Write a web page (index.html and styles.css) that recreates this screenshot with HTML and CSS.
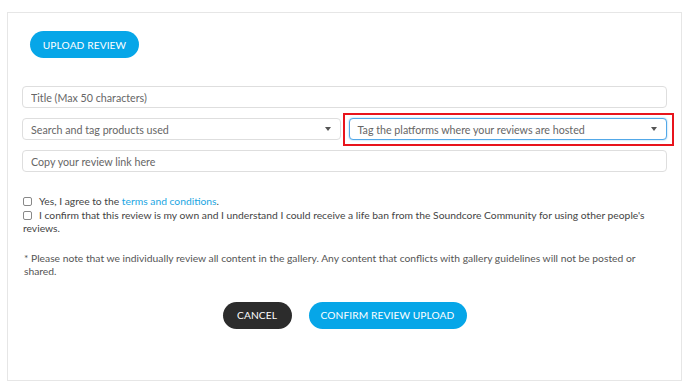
FILE: index.html
```html
<!DOCTYPE html>
<html lang="en">
<head>
    <meta charset="UTF-8">
    <meta name="viewport" content="width=device-width, initial-scale=1.0">
    <title>Upload Review</title>
    <link rel="stylesheet" href="styles.css">
</head>
<body>

<div class="card">
    <button class="btn btn-blue upload-btn">UPLOAD REVIEW</button>

    <form class="review-form">
        <input type="text" class="field" placeholder="Title (Max 50 characters)">
        <div class="field-row">
            <div class="select">
                <span>Search and tag products used</span>
                <span class="caret"></span>
            </div>
            <div class="highlight">
                <div class="select select-focus">
                    <span>Tag the platforms where your reviews are hosted</span>
                    <span class="caret"></span>
                </div>
            </div>
        </div>
        <input type="text" class="field" placeholder="Copy your review link here">

        <div class="checks">
            <label class="check"><span class="box"></span>Yes, I agree to the <a href="#">terms and conditions</a>.</label>
            <label class="check"><span class="box"></span>I confirm that this review is my own and I understand I could receive a life ban from the Soundcore Community for using other people's reviews.</label>
        </div>

        <p class="note">* Please note that we individually review all content in the gallery. Any content that conflicts with gallery guidelines will not be posted or shared.</p>

        <div class="actions">
            <button type="button" class="btn btn-dark">CANCEL</button>
            <button type="button" class="btn btn-blue">CONFIRM REVIEW UPLOAD</button>
        </div>
    </form>
</div>

</body>
</html>
```

FILE: styles.css
```css
body {
    margin: 0;
    padding: 12px 8px 9px 7px;
    background-color: #fff;
    font-family: Lato, "Open Sans", Arial, sans-serif;
    color: #555;
}
.card {
    border: 1px solid #e6e6e6;
    padding: 18px 14px 51px 14px;
    height: 369px;
    box-sizing: border-box;
}
.btn {
    border: none;
    border-radius: 14px;
    height: 27px;
    padding: 0;
    color: #fff;
    font-family: inherit;
    font-size: 10.2px;
    letter-spacing: 0.1px;
    white-space: nowrap;
    cursor: pointer;
}
.btn-blue {
    background-color: #06a6e8;
}
.btn-dark {
    background-color: #2c2c2c;
}
.upload-btn {
    margin-left: 8px;
    width: 109px;
}
.review-form {
    display: flex;
    flex-direction: column;
    gap: 10px;
    margin-top: 28px;
}
.field, .select {
    height: 22px;
    box-sizing: border-box;
    border: 1px solid #dedede;
    border-radius: 4px;
    padding: 0 8px;
    font-family: inherit;
    font-size: 10.7px;
    color: #555;
    background: #fff;
    outline: none;
}
.field::placeholder {
    color: #666;
}
.field-row {
    display: grid;
    grid-template-columns: minmax(0, 1fr) minmax(0, 1fr);
    gap: 8px;
}
.select {
    display: flex;
    align-items: center;
    justify-content: space-between;
    color: #666;
}
.highlight {
    position: relative;
}
.highlight::after {
    content: "";
    position: absolute;
    top: -5px;
    bottom: -6px;
    left: -6px;
    right: -7px;
    border: 2px solid #e8141c;
}
.select-focus {
    border-color: #52a8e8;
    box-shadow: 0 0 2px #8ac6f2;
}
.caret {
    width: 0;
    height: 0;
    border-left: 3.5px solid transparent;
    border-right: 3.5px solid transparent;
    border-top: 4px solid #555;
    margin-right: 1px;
}
.checks {
    margin-top: 13px;
    display: flex;
    flex-direction: column;
    font-size: 10.3px;
    line-height: 13.5px;
    color: #444;
}
.check {
    padding-left: 1px;
}
.box {
    display: inline-block;
    width: 7px;
    height: 7px;
    border: 1px solid #888;
    border-radius: 2px;
    margin-right: 7px;
    vertical-align: -1px;
}
.check a {
    color: #1aa6e2;
    text-decoration: none;
}
.note {
    margin: 6px 0 0;
    font-size: 10.3px;
    line-height: 13.5px;
    padding-left: 2px;
    color: #555;
}
.actions {
    margin-top: 13px;
    display: flex;
    justify-content: center;
    gap: 17px;
}
.actions .btn-dark {
    width: 69px;
}
.actions .btn-blue {
    width: 158px;
}
```
